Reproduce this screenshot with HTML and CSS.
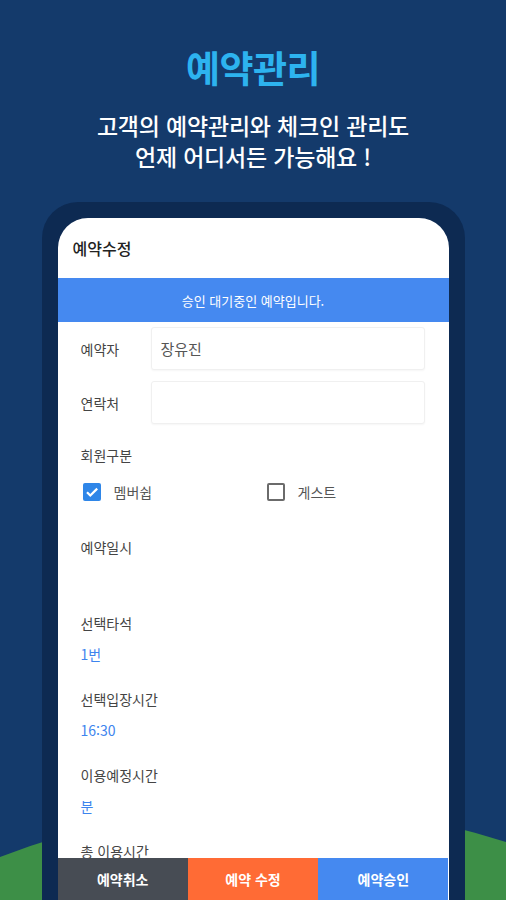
FILE: index.html
```html
<!DOCTYPE html>
<html lang="ko">
<head>
  <meta charset="UTF-8" />
  <meta name="viewport" content="width=device-width, initial-scale=1" />
  <title>예약관리</title>
  <link rel="stylesheet" href="styles.css">
</head>
<body>
  <svg class="hill" viewBox="0 0 506 900" preserveAspectRatio="none" aria-hidden="true">
    <path d="M0 857 Q250 760 506 842 L506 900 L0 900 Z" fill="#3d8f47" />
  </svg>

  <header class="hero">
    <h1>예약관리</h1>
    <p>고객의 예약관리와 체크인 관리도<br>언제 어디서든 가능해요 !</p>
  </header>

  <div class="phone">
    <div class="screen">
      <div class="app-bar">예약수정</div>
      <div class="notice">승인 대기중인 예약입니다.</div>

      <div class="form">
        <div class="row">
          <label for="name">예약자</label>
          <input id="name" type="text" value="장유진" />
        </div>
        <div class="row">
          <label for="phone">연락처</label>
          <input id="phone" type="text" value="" />
        </div>

        <div class="group-label">회원구분</div>
        <div class="checks">
          <span class="check">
            <span class="box checked">
              <svg viewBox="0 0 18 18" width="18" height="18"><path d="M4 9.2l3.3 3.3L14.2 5.6" fill="none" stroke="#fff" stroke-width="2.2" /></svg>
            </span>
            멤버쉽
          </span>
          <span class="check">
            <span class="box"></span>
            게스트
          </span>
        </div>

        <div class="field date">
          <div class="field-label">예약일시</div>
          <div class="field-value"></div>
        </div>
        <div class="field">
          <div class="field-label">선택타석</div>
          <div class="field-value">1번</div>
        </div>
        <div class="field">
          <div class="field-label">선택입장시간</div>
          <div class="field-value">16:30</div>
        </div>
        <div class="field">
          <div class="field-label">이용예정시간</div>
          <div class="field-value">분</div>
        </div>
        <div class="field">
          <div class="field-label">총 이용시간</div>
        </div>
      </div>

      <div class="actions">
        <button class="btn cancel">예약취소</button>
        <button class="btn edit">예약 수정</button>
        <button class="btn approve">예약승인</button>
      </div>
    </div>
  </div>
</body>
</html>
```

FILE: styles.css
```css
html, body {
  margin: 0;
  height: 100%;
}
body {
  font-family: "Noto Sans CJK KR", "Noto Sans", sans-serif;
  background: #143a6b;
  width: 506px;
  height: 900px;
  overflow: hidden;
  position: relative;
}
.hill {
  position: absolute;
  left: 0;
  top: 0;
  width: 506px;
  height: 900px;
  z-index: 0;
}
.hero {
  position: relative;
  text-align: center;
  padding-top: 46px;
}
.hero h1 {
  margin: 0;
  font-size: 37px;
  line-height: 42px;
  font-weight: 700;
  color: #2db3ef;
  letter-spacing: -0.5px;
}
.hero p {
  margin: 22px 0 0;
  font-size: 23px;
  line-height: 31px;
  color: #fff;
  font-weight: 500;
  letter-spacing: -0.2px;
}
.phone {
  position: relative;
  width: 391px;
  margin: 30px auto 0;
  padding: 16px 16px 0;
  background: #0d2a52;
  border-radius: 36px 36px 0 0;
}
.screen {
  background: #fff;
  border-radius: 30px 30px 0 0;
  height: 682px;
  overflow: hidden;
  display: flex;
  flex-direction: column;
}
.app-bar {
  height: 60px;
  flex: none;
  display: flex;
  align-items: center;
  padding-left: 15px;
  font-size: 16px;
  color: #222;
  font-weight: 500;
}
.notice {
  height: 44px;
  flex: none;
  background: #4589f0;
  color: #fff;
  font-size: 13px;
  display: flex;
  align-items: center;
  justify-content: center;
}
.form {
  flex: 1;
  overflow: hidden;
  padding: 5px 24px 0 23px;
  color: #444;
  font-size: 14px;
}
.row {
  display: flex;
  align-items: center;
  margin-bottom: 11px;
}
.row label {
  width: 70px;
  flex: none;
  color: #444;
}
.row input {
  flex: 1;
  min-width: 0;
  height: 43px;
  box-sizing: border-box;
  border: 1px solid #f0f0f0;
  border-radius: 3px;
  box-shadow: 0 1px 2px rgba(0, 0, 0, 0.04);
  padding: 0 9px;
  font-family: inherit;
  font-size: 15px;
  color: #555;
  outline: none;
}
.group-label {
  margin-top: 21px;
  line-height: 20px;
}
.checks {
  display: flex;
  align-items: center;
  margin-top: 17px;
  height: 20px;
  padding-left: 2px;
  color: #555;
}
.check {
  display: flex;
  align-items: center;
  gap: 13px;
  flex: none;
  width: 184px;
}
.box {
  width: 18px;
  height: 18px;
  box-sizing: border-box;
  border: 2px solid #6b6b6b;
  border-radius: 2px;
  display: inline-block;
}
.box.checked {
  border: none;
  background: #2f86e8;
}
.box svg {
  display: block;
}
.field {
  margin-top: 25px;
}
.field.date {
  margin-top: 35px;
}
.field-label {
  line-height: 20px;
}
.field-value {
  margin-top: 11px;
  line-height: 20px;
  min-height: 20px;
  color: #3d84ee;
}
.actions {
  height: 42px;
  flex: none;
  display: flex;
}
.btn {
  flex: 1;
  border: none;
  margin: 0;
  font-family: inherit;
  font-size: 14px;
  font-weight: 700;
  color: #fff;
  cursor: pointer;
}
.btn.cancel {
  background: #474c54;
}
.btn.edit {
  background: #ff6b35;
}
.btn.approve {
  background: #4589f0;
}
```
